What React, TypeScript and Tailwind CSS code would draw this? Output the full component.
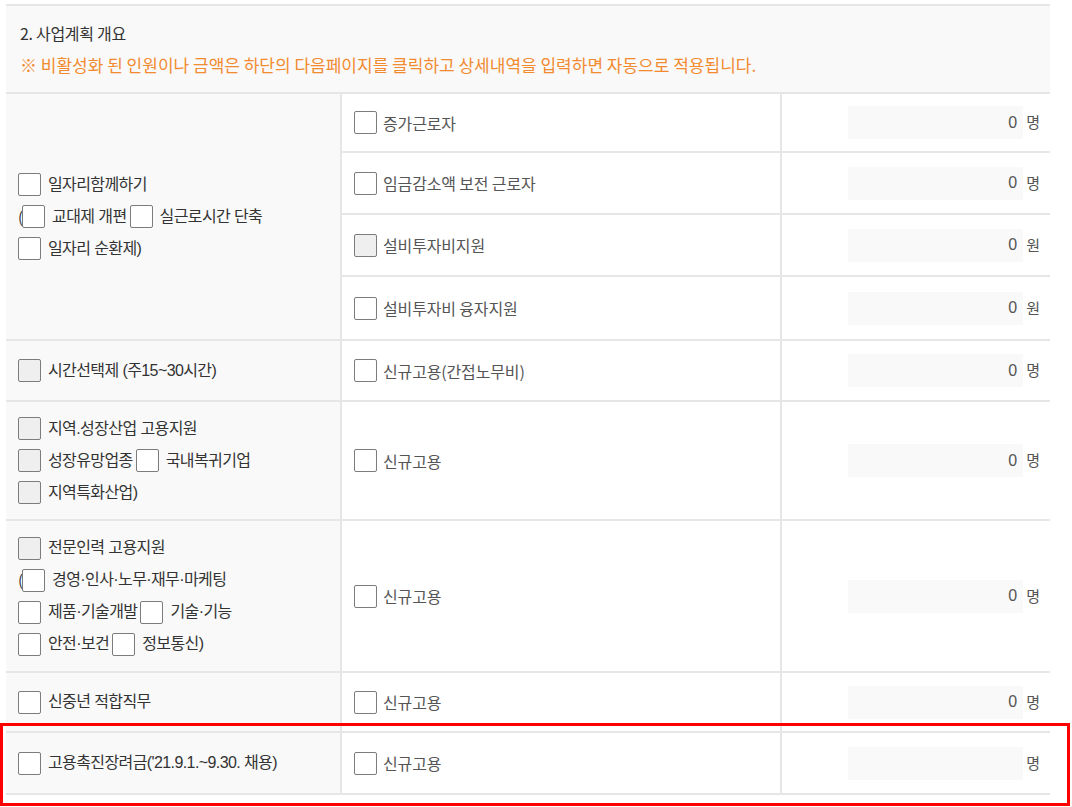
import React from 'react';

const FONT = "font-['Noto_Sans_CJK_KR','Noto_Sans',sans-serif]";

const Box = ({ gray = false }: { gray?: boolean }) => (
  <span
    className={`inline-block w-[23px] h-[23px] shrink-0 rounded-[2px] border-[1.5px] border-[#7c7c7c] ${gray ? 'bg-[#efefef]' : 'bg-white'}`}
  />
);

// Latin glyphs (digits, parens, middle dot) from Liberation Sans keep the labels compact
const Label = ({ children }: { children: React.ReactNode }) => (
  <span className="ml-[7px] mr-[3px] whitespace-nowrap font-['Liberation_Sans','Noto_Sans_CJK_KR',sans-serif] text-[16px] leading-[24px] tracking-[-0.6px] text-[#333]">
    {children}
  </span>
);

const Line = ({ children }: { children: React.ReactNode }) => (
  <div className="flex items-center h-[24px]">{children}</div>
);

const Paren = () => <span className="text-[15px] leading-[24px] text-[#333] -mr-[1px]">(</span>;

type Sub = { label: string; unit: string; value?: string; gray?: boolean; h: string };

const SubRow = ({ label, unit, value = '0', gray, h }: Sub) => (
  <div className={`flex ${h}`}>
    <div className="w-[440px] shrink-0 border-r-2 border-[#e6e6e6] flex items-center pl-[12px]">
      <Box gray={gray} />
      <span className="ml-[6px] whitespace-nowrap text-[16px] tracking-[-0.15px] text-[#555]">{label}</span>
    </div>
    <div className="flex-1 flex items-center justify-end pr-[10px]">
      <div className="w-[175px] h-[33px] bg-[#f9f9f9] flex items-center justify-end pr-[6px] font-['Liberation_Sans','Noto_Sans_CJK_KR',sans-serif] text-[16px] text-[#555]">
        {value}
      </div>
      <span className="ml-[3px] text-[15px] text-[#555]">{unit}</span>
    </div>
  </div>
);

const Row = ({ left, children }: { left: React.ReactNode; children: React.ReactNode }) => (
  <div className="flex border-b-2 border-[#e6e6e6]">
    <div className="w-[336px] shrink-0 bg-[#f9f9f9] border-r-2 border-[#e6e6e6] flex flex-col justify-center gap-[8px] pl-[12px]">
      {left}
    </div>
    <div className="flex-1 flex flex-col divide-y-2 divide-[#e6e6e6]">{children}</div>
  </div>
);

export default function App() {
  return (
    <div className={`relative w-[1072px] h-[807px] bg-white overflow-hidden ${FONT}`}>
      <div className="ml-[6px] mt-[4px] w-[1044px]">
        {/* header */}
        <div className="h-[90px] bg-[#f9f9f9] border-t-2 border-b-2 border-[#e6e6e6] pl-[14px] pt-[16px] flex flex-col">
          <div className="text-[16px] leading-[22px] tracking-[-0.3px] text-[#333]">2. 사업계획 개요</div>
          <div className="mt-[9px] text-[17px] leading-[24px] text-[#f28b30]">
            ※ 비활성화 된 인원이나 금액은 하단의 다음페이지를 클릭하고 상세내역을 입력하면 자동으로 적용됩니다.
          </div>
        </div>

        <Row
          left={
            <>
              <Line>
                <Box />
                <Label>일자리함께하기</Label>
              </Line>
              <Line>
                <Paren />
                <Box />
                <Label>교대제 개편</Label>
                <Box />
                <Label>실근로시간 단축</Label>
              </Line>
              <Line>
                <Box />
                <Label>일자리 순환제)</Label>
              </Line>
            </>
          }
        >
          <SubRow label="증가근로자" unit="명" h="h-[59px]" />
          <SubRow label="임금감소액 보전 근로자" unit="명" h="h-[62px]" />
          <SubRow label="설비투자비지원" unit="원" gray h="h-[62px]" />
          <SubRow label="설비투자비 융자지원" unit="원" h="h-[62px]" />
        </Row>

        <Row
          left={
            <Line>
              <Box gray />
              <Label>시간선택제 (주15~30시간)</Label>
            </Line>
          }
        >
          <SubRow label="신규고용(간접노무비)" unit="명" h="h-[59px]" />
        </Row>

        <Row
          left={
            <>
              <Line>
                <Box gray />
                <Label>지역.성장산업 고용지원</Label>
              </Line>
              <Line>
                <Box gray />
                <Label>성장유망업종</Label>
                <Box />
                <Label>국내복귀기업</Label>
              </Line>
              <Line>
                <Box gray />
                <Label>지역특화산업)</Label>
              </Line>
            </>
          }
        >
          <SubRow label="신규고용" unit="명" h="h-[117px]" />
        </Row>

        <Row
          left={
            <>
              <Line>
                <Box gray />
                <Label>전문인력 고용지원</Label>
              </Line>
              <Line>
                <Paren />
                <Box />
                <Label>경영·인사·노무·재무·마케팅</Label>
              </Line>
              <Line>
                <Box />
                <Label>제품·기술개발</Label>
                <Box />
                <Label>기술·기능</Label>
              </Line>
              <Line>
                <Box />
                <Label>안전·보건</Label>
                <Box />
                <Label>정보통신)</Label>
              </Line>
            </>
          }
        >
          <SubRow label="신규고용" unit="명" h="h-[150px]" />
        </Row>

        <Row
          left={
            <Line>
              <Box />
              <Label>신중년 적합직무</Label>
            </Line>
          }
        >
          <SubRow label="신규고용" unit="명" h="h-[58px]" />
        </Row>

        <Row
          left={
            <Line>
              <Box />
              <Label>고용촉진장려금('21.9.1.~9.30. 채용)</Label>
            </Line>
          }
        >
          <SubRow label="신규고용" unit="명" value="" h="h-[60px]" />
        </Row>
      </div>

      {/* highlight annotation */}
      <div className="absolute left-0 top-[723px] w-[1070px] h-[83px] border-[3px] border-[#ff0000] pointer-events-none" />
    </div>
  );
}
